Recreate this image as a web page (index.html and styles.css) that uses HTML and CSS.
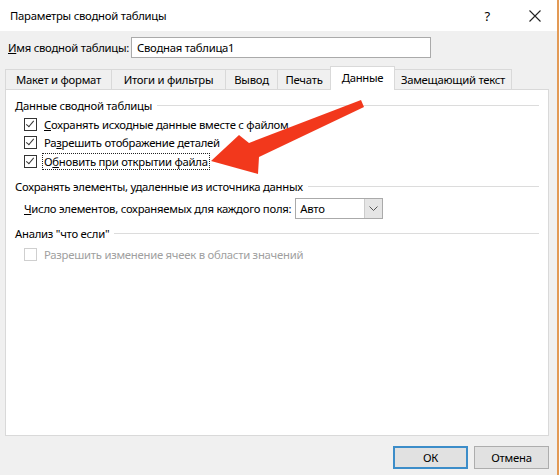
FILE: index.html
```html
<!DOCTYPE html>
<html lang="ru">
<head>
    <meta charset="UTF-8">
    <meta name="viewport" content="width=device-width, initial-scale=1.0">
    <title>Параметры сводной таблицы</title>
    <link rel="stylesheet" href="styles.css">
</head>
<body>
    <div class="dialog">
        <div class="titlebar">
            <span class="title">Параметры сводной таблицы</span>
            <span class="help">?</span>
            <svg class="close" width="12" height="12" viewBox="0 0 12 12">
                <path d="M0.5 0.5 L11.5 11.5 M11.5 0.5 L0.5 11.5" stroke="#222" stroke-width="1.1" fill="none"/>
            </svg>
        </div>
        <div class="content">
            <div class="name-row">
                <label class="name-label"><u>И</u>мя сводной таблицы:</label>
                <div class="name-input">Сводная таблица1</div>
            </div>
            <div class="tabs">
                <div class="tab t1">Макет и формат</div>
                <div class="tab t2">Итоги и фильтры</div>
                <div class="tab t3">Вывод</div>
                <div class="tab t4">Печать</div>
                <div class="tab active">Данные</div>
                <div class="tab t6">Замещающий текст</div>
            </div>
            <div class="panel">
                <div class="group-title"><span>Данные сводной таблицы</span></div>
                <div class="check first"><span class="box checked"></span><span class="check-text"><u>С</u>охранять исходные данные вместе с файлом</span></div>
                <div class="check"><span class="box checked"></span><span class="check-text">Ра<u>з</u>решить отображение деталей</span></div>
                <div class="check"><span class="box checked"></span><span class="check-text focus">О<u>б</u>новить при открытии файла</span></div>

                <div class="group-title second"><span>Сохранять элементы, удаленные из источника данных</span></div>
                <div class="select-row">
                    <span><u>Ч</u>исло элементов, сохраняемых для каждого поля:</span>
                    <div class="select">
                        <span class="select-value">Авто</span>
                        <span class="select-btn">
                            <svg width="9" height="5" viewBox="0 0 9 5"><path d="M0.5 0.5 L4.5 4.5 L8.5 0.5" stroke="#555" fill="none"/></svg>
                        </span>
                    </div>
                </div>

                <div class="group-title third"><span>Анализ "что если"</span></div>
                <div class="check disabled"><span class="box"></span><span class="check-text">Разрешить изменение ячеек в области значений</span></div>
            </div>
            <div class="buttons">
                <div class="btn default">ОК</div>
                <div class="btn">Отмена</div>
            </div>
        </div>
        <svg class="arrow" width="559" height="475" viewBox="0 0 559 475">
            <defs>
                <filter id="blur" x="-10%" y="-10%" width="120%" height="120%">
                    <feGaussianBlur stdDeviation="0.6"/>
                </filter>
            </defs>
            <polygon filter="url(#blur)" fill="#f2391f"
                points="211,161 239,135 249,143 361,100 364,107 259,157 258,174"/>
        </svg>
    </div>
</body>
</html>
```

FILE: styles.css
```css
html, body {
    margin: 0;
    padding: 0;
}
body {
    font-family: "Noto Sans", "Open Sans", sans-serif;
    font-size: 11.3px;
    letter-spacing: -0.25px;
    color: #000;
    background: #fff;
    white-space: nowrap;
}
.dialog {
    position: relative;
    width: 557px;
    height: 475px;
    background: #f0f0f0;
    border-right: 2px solid #e39a55;
    display: flex;
    flex-direction: column;
}
.titlebar {
    height: 31px;
    background: #fff;
    display: flex;
    align-items: center;
    padding-left: 10px;
}
.title {
    flex: 1;
}
.help {
    font-size: 13px;
    margin-right: 39px;
}
.close {
    margin-right: 16px;
}
.content {
    flex: 1;
    display: flex;
    flex-direction: column;
    padding: 6px 0 0 5px;
}
.name-row {
    display: flex;
    align-items: center;
    height: 21px;
    padding-left: 3px;
}
.name-label {
    width: 123px;
}
.name-input {
    width: 293px;
    height: 19px;
    line-height: 19px;
    border: 1px solid #aaa;
    background: #fff;
    padding-left: 5px;
}
.tabs {
    display: flex;
    align-items: flex-end;
    margin-top: 8px;
    height: 23px;
}
.tab {
    box-sizing: border-box;
    height: 20px;
    line-height: 19px;
    border: 1px solid #d9d9d9;
    border-bottom: none;
    border-right: none;
    text-align: center;
    background: #f0f0f0;
}
.t1 { width: 106px; }
.t2 { width: 114px; }
.t3 { width: 52px; }
.t4 { width: 53px; }
.tab.active {
    position: relative;
    z-index: 1;
    width: 65px;
    height: 24px;
    line-height: 21px;
    margin-bottom: -1px;
    border-right: 1px solid #d9d9d9;
    background: #fff;
}
.t6 {
    width: 117px;
    border-left: none;
    border-right: 1px solid #d9d9d9;
}
.panel {
    width: 544px;
    height: 347px;
    background: #fff;
    border: 1px solid #d9d9d9;
    padding: 0 0 0 9px;
    box-sizing: border-box;
}
.group-title {
    display: flex;
    align-items: center;
    height: 16px;
    margin-top: 7px;
    margin-right: 9px;
}
.group-title::after {
    content: "";
    flex: 1;
    border-top: 1px solid #dcdcdc;
    margin-left: 5px;
}
.group-title.second {
    margin-top: 8px;
}
.group-title.third {
    margin-top: 6px;
}
.check {
    display: flex;
    align-items: center;
    height: 18.5px;
    padding-left: 9px;
}
.check.first {
    margin-top: 2px;
}
.box {
    width: 11px;
    height: 11px;
    border: 1px solid #333;
    background: #fff;
    margin-right: 5px;
    position: relative;
}
.box.checked::after {
    content: "";
    position: absolute;
    left: 3px;
    top: 0px;
    width: 3px;
    height: 7px;
    border-right: 1.2px solid #333;
    border-bottom: 1.2px solid #333;
    transform: rotate(40deg);
}
.check-text {
    padding: 0 1px;
    border: 1px dotted transparent;
}
.check-text.focus {
    border-color: #222;
}
.check.disabled {
    color: #a0a0a0;
    margin-top: 3px;
    height: 19px;
}
.check.disabled .box {
    border-color: #cfcfcf;
}
.select-row {
    display: flex;
    align-items: center;
    padding-left: 9px;
    margin-top: 3px;
    height: 22px;
}
.select {
    display: flex;
    width: 86px;
    height: 19px;
    border: 1px solid #aaa;
    margin-left: 4px;
    background: #fff;
}
.select-value {
    flex: 1;
    line-height: 19px;
    padding-left: 4px;
}
.select-btn {
    width: 17px;
    background: #e5e5e5;
    border-left: 1px solid #ccc;
    display: flex;
    align-items: center;
    justify-content: center;
}
.buttons {
    display: flex;
    justify-content: flex-end;
    gap: 6px;
    margin-top: 10px;
    padding-right: 8px;
}
.btn {
    width: 73px;
    height: 21px;
    line-height: 21px;
    text-align: center;
    background: #e1e1e1;
    border: 1px solid #adadad;
}
.btn.default {
    border: 2px solid #3c8dc9;
    width: 71px;
    height: 19px;
    line-height: 19px;
}
.arrow {
    position: absolute;
    left: 0;
    top: 0;
    pointer-events: none;
}
```
